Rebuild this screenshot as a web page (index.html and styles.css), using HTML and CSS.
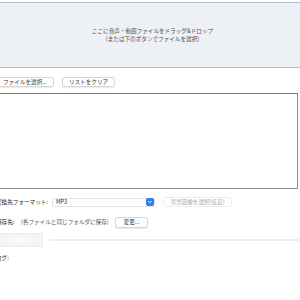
FILE: index.html
```html
<!DOCTYPE html>
<html lang="ja">
<head>
    <meta charset="UTF-8">
    <meta name="viewport" content="width=device-width, initial-scale=1.0">
    <title>音声・動画変換</title>
    <link rel="stylesheet" href="styles.css">
</head>
<body>
    <div class="app">
        <div class="drop-zone">
            <p>ここに音声・動画ファイルをドラッグ&amp;ドロップ</p>
            <p>(または下のボタンでファイルを選択)</p>
        </div>

        <div class="row file-actions">
            <button class="btn btn-select">ファイルを選択...</button>
            <button class="btn btn-clear">リストをクリア</button>
        </div>

        <div class="file-list"></div>

        <div class="row format-row">
            <span class="label">変換先フォーマット:</span>
            <div class="select">
                <span>MP3</span>
                <span class="select-arrow">
                    <svg width="6" height="6" viewBox="0 0 6 6"><path d="M1.5 2.3 L3 3.8 L4.5 2.3" fill="none" stroke="#fff" stroke-width="0.9" stroke-linecap="round" stroke-linejoin="round"/></svg>
                </span>
            </div>
            <button class="btn btn-bg" disabled>背景画像を選択(任意)</button>
        </div>

        <div class="row save-row">
            <span class="label">保存先:</span>
            <span class="save-path">(各ファイルと同じフォルダに保存)</span>
            <button class="btn btn-change">変更...</button>
        </div>

        <div class="row convert-row">
            <button class="btn-convert" disabled>変換開始</button>
            <div class="progress"></div>
        </div>

        <div class="log-label">ログ:</div>
    </div>
</body>
</html>
```

FILE: styles.css
```css
body {
    margin: 0;
    padding: 0;
    background: #fff;
    font-family: 'Noto Sans CJK JP', 'Noto Sans', sans-serif;
    color: #333;
    overflow: hidden;
}
.app {
    margin-left: -4px;
    width: 303px;
    padding-top: 2px;
    font-size: 5.6px;
}
.drop-zone {
    height: 64px;
    margin-right: -10px;
    border-top: 1px solid #a9bdd0;
    border-bottom: 1px solid #a9bdd0;
    background: #edf1f5;
    color: #4a4a4a;
    display: flex;
    flex-direction: column;
    justify-content: center;
    align-items: center;
    line-height: 8px;
}
.drop-zone p {
    margin: 0;
}
.row {
    display: flex;
    align-items: center;
}
.btn {
    font-family: inherit;
    font-size: 5.6px;
    color: #333;
    background: #fff;
    border: 1px solid #d6d6d6;
    border-radius: 3px;
    box-shadow: 0 0.5px 1px rgba(0, 0, 0, 0.08);
    padding: 0;
    height: 10px;
    line-height: 8px;
}
.file-actions {
    margin-top: 9px;
    gap: 8px;
}
.btn-select {
    width: 58px;
}
.btn-clear {
    width: 53px;
}
.file-list {
    margin-top: 6px;
    height: 94px;
    width: 300px;
    border: 1px solid #8d8d8d;
    border-top-color: #7a7a7a;
    background: #fff;
}
.format-row {
    margin-top: 8px;
    height: 10px;
}
.label {
    width: 56px;
    flex: none;
    color: #222;
}
.save-row .label {
    width: 25px;
}
.select {
    width: 103px;
    height: 9px;
    border: 1px solid #e2e2e2;
    border-radius: 2px;
    display: flex;
    align-items: center;
    justify-content: space-between;
    padding-left: 3px;
    box-sizing: border-box;
    color: #222;
}
.select-arrow {
    width: 8px;
    height: 8px;
    background: #2f7df6;
    border-radius: 2px;
    display: flex;
    align-items: center;
    justify-content: center;
}
.btn-bg {
    margin-left: 8px;
    width: 69px;
    color: #a8a8a8;
    border-color: #ececec;
    box-shadow: none;
}
.save-row {
    margin-top: 9px;
    height: 12px;
}
.save-path {
    color: #555;
    width: 94px;
}
.btn-change {
    width: 33px;
    height: 11px;
}
.convert-row {
    margin-top: 5px;
    height: 14px;
    gap: 6px;
}
.btn-convert {
    width: 47px;
    height: 14px;
    font-family: inherit;
    font-size: 5.6px;
    color: #fff;
    background: #f4f4f4;
    border: 1px solid #ececec;
    border-radius: 1px;
    padding: 0;
}
.progress {
    flex: 1;
    height: 2px;
    background: #ececec;
    border-radius: 1px;
}
.log-label {
    margin-top: 7px;
    line-height: 8px;
    color: #222;
}
```
